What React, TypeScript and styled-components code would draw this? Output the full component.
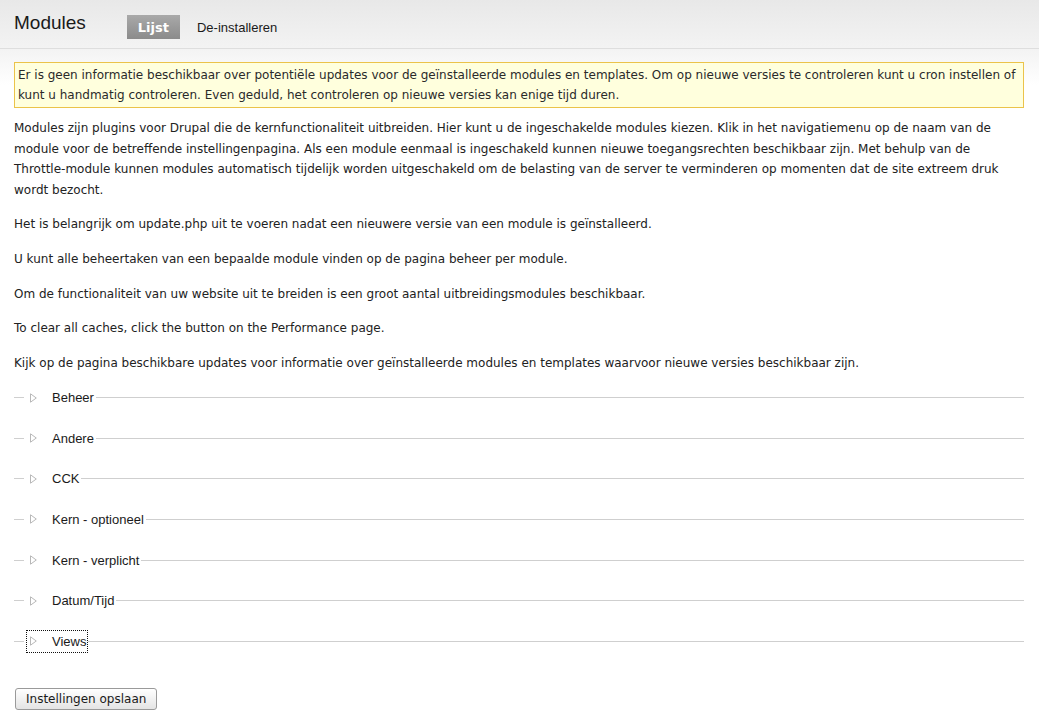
import React from "react";
import styled, { createGlobalStyle } from "styled-components";

const Global = createGlobalStyle`
  html, body { margin: 0; padding: 0; background: #fff; }
  body { font-family: "DejaVu Sans", sans-serif; font-size: 12px; color: #222; }
`;

const Header = styled.header`
  height: 48px;
  border-bottom: 1px solid #dedede;
  background: linear-gradient(#e8e8e8, #f3f3f3);
  display: flex;
  align-items: flex-start;
  padding-left: 14px;
`;

const Title = styled.h1`
  margin: 12px 0 0 0;
  font-family: "Liberation Sans", Arial, sans-serif;
  font-weight: normal;
  font-size: 19px;
  line-height: 22px;
  color: #1a1a1a;
`;

const Tabs = styled.nav`
  display: flex;
  align-items: center;
  margin: 15px 0 0 41px;
  gap: 17px;
`;

const Tab = styled.a<{ $active?: boolean }>`
  display: inline-flex;
  align-items: center;
  height: 23px;
  padding: 1px ${(p) => (p.$active ? "11px" : "0")} 0;
  font-family: ${(p) => (p.$active ? '"DejaVu Sans", sans-serif' : '"Liberation Sans", Arial, sans-serif')};
  font-size: 13px;
  font-weight: ${(p) => (p.$active ? "bold" : "normal")};
  color: ${(p) => (p.$active ? "#fff" : "#1a1a1a")};
  background: ${(p) => (p.$active ? "linear-gradient(#a9a9a9, #8b8b8b)" : "none")};
  text-decoration: none;
`;

const Content = styled.main`
  padding: 13px 15px 20px 14px;
  background: linear-gradient(#f3f3f3 0px, #ffffff 36px);
`;

const Message = styled.div`
  border: 1px solid #ebc34a;
  background: #ffffdd;
  padding: 2px 3px;
  line-height: 20px;
  color: #2a2a2a;
  margin-bottom: 10px;
`;

const Para = styled.p`
  margin: 0 0 14.2px 0;
  line-height: 20.5px;
`;

const Groups = styled.div`
  margin-top: 0.6px;
`;

const Group = styled.div`
  display: flex;
  align-items: center;
  height: 20px;
  margin-bottom: 20.6px;
`;

const LineStart = styled.span`
  width: 10px;
  border-top: 1px solid #cfcfcf;
  margin-right: 3px;
`;

const LineEnd = styled.span`
  flex: 1;
  border-top: 1px solid #cfcfcf;
  margin-left: 1px;
`;

const Legend = styled.span<{ $focused?: boolean }>`
  display: inline-flex;
  align-items: center;
  height: 21px;
  padding: 0 1px 0 3px;
  font-family: "Liberation Sans", Arial, sans-serif;
  font-size: 13px;
  color: #1a1a1a;
  outline: ${(p) => (p.$focused ? "1px dotted #111" : "none")};
  outline-offset: 0;
  cursor: pointer;
`;

const Arrow = styled.svg`
  width: 7px;
  height: 10px;
  margin-right: 15px;
`;

const SaveButton = styled.button`
  margin-top: 16.5px;
  height: 22px;
  padding: 0 10px;
  font-family: "DejaVu Sans", sans-serif;
  font-size: 12px;
  color: #1a1a1a;
  border: 1px solid #9a9a9a;
  border-radius: 3px;
  background: linear-gradient(#ffffff, #e4e4e4);
  margin-left: 1px;
`;

const groups = ["Beheer", "Andere", "CCK", "Kern - optioneel", "Kern - verplicht", "Datum/Tijd", "Views"];

const Triangle = () => (
  <Arrow viewBox="0 0 7 10">
    <path d="M0.5 0.8 L6.3 5 L0.5 9.2 Z" fill="none" stroke="#b8b8b8" strokeWidth="1" />
  </Arrow>
);

export default function App() {
  return (
    <>
      <Global />
      <Header>
        <Title>Modules</Title>
        <Tabs>
          <Tab $active>Lijst</Tab>
          <Tab>De-installeren</Tab>
        </Tabs>
      </Header>
      <Content>
        <Message>
          Er is geen informatie beschikbaar over potentiële updates voor de geïnstalleerde modules en templates. Om op nieuwe versies te controleren kunt u cron instellen of kunt u handmatig controleren. Even geduld, het controleren op nieuwe versies kan enige tijd duren.
        </Message>
        <Para>
          Modules zijn plugins voor Drupal die de kernfunctionaliteit uitbreiden. Hier kunt u de ingeschakelde modules kiezen. Klik in het navigatiemenu op de naam van de module voor de betreffende instellingenpagina. Als een module eenmaal is ingeschakeld kunnen nieuwe toegangsrechten beschikbaar zijn. Met behulp van de Throttle-module kunnen modules automatisch tijdelijk worden uitgeschakeld om de belasting van de server te verminderen op momenten dat de site extreem druk wordt bezocht.
        </Para>
        <Para>Het is belangrijk om update.php uit te voeren nadat een nieuwere versie van een module is geïnstalleerd.</Para>
        <Para>U kunt alle beheertaken van een bepaalde module vinden op de pagina beheer per module.</Para>
        <Para>Om de functionaliteit van uw website uit te breiden is een groot aantal uitbreidingsmodules beschikbaar.</Para>
        <Para>To clear all caches, click the button on the Performance page.</Para>
        <Para>Kijk op de pagina beschikbare updates voor informatie over geïnstalleerde modules en templates waarvoor nieuwe versies beschikbaar zijn.</Para>
        <Groups>
          {groups.map((g, i) => (
            <Group key={g}>
              <LineStart />
              <Legend $focused={i === groups.length - 1}>
                <Triangle />
                {g}
              </Legend>
              <LineEnd />
            </Group>
          ))}
        </Groups>
        <SaveButton>Instellingen opslaan</SaveButton>
      </Content>
    </>
  );
}
